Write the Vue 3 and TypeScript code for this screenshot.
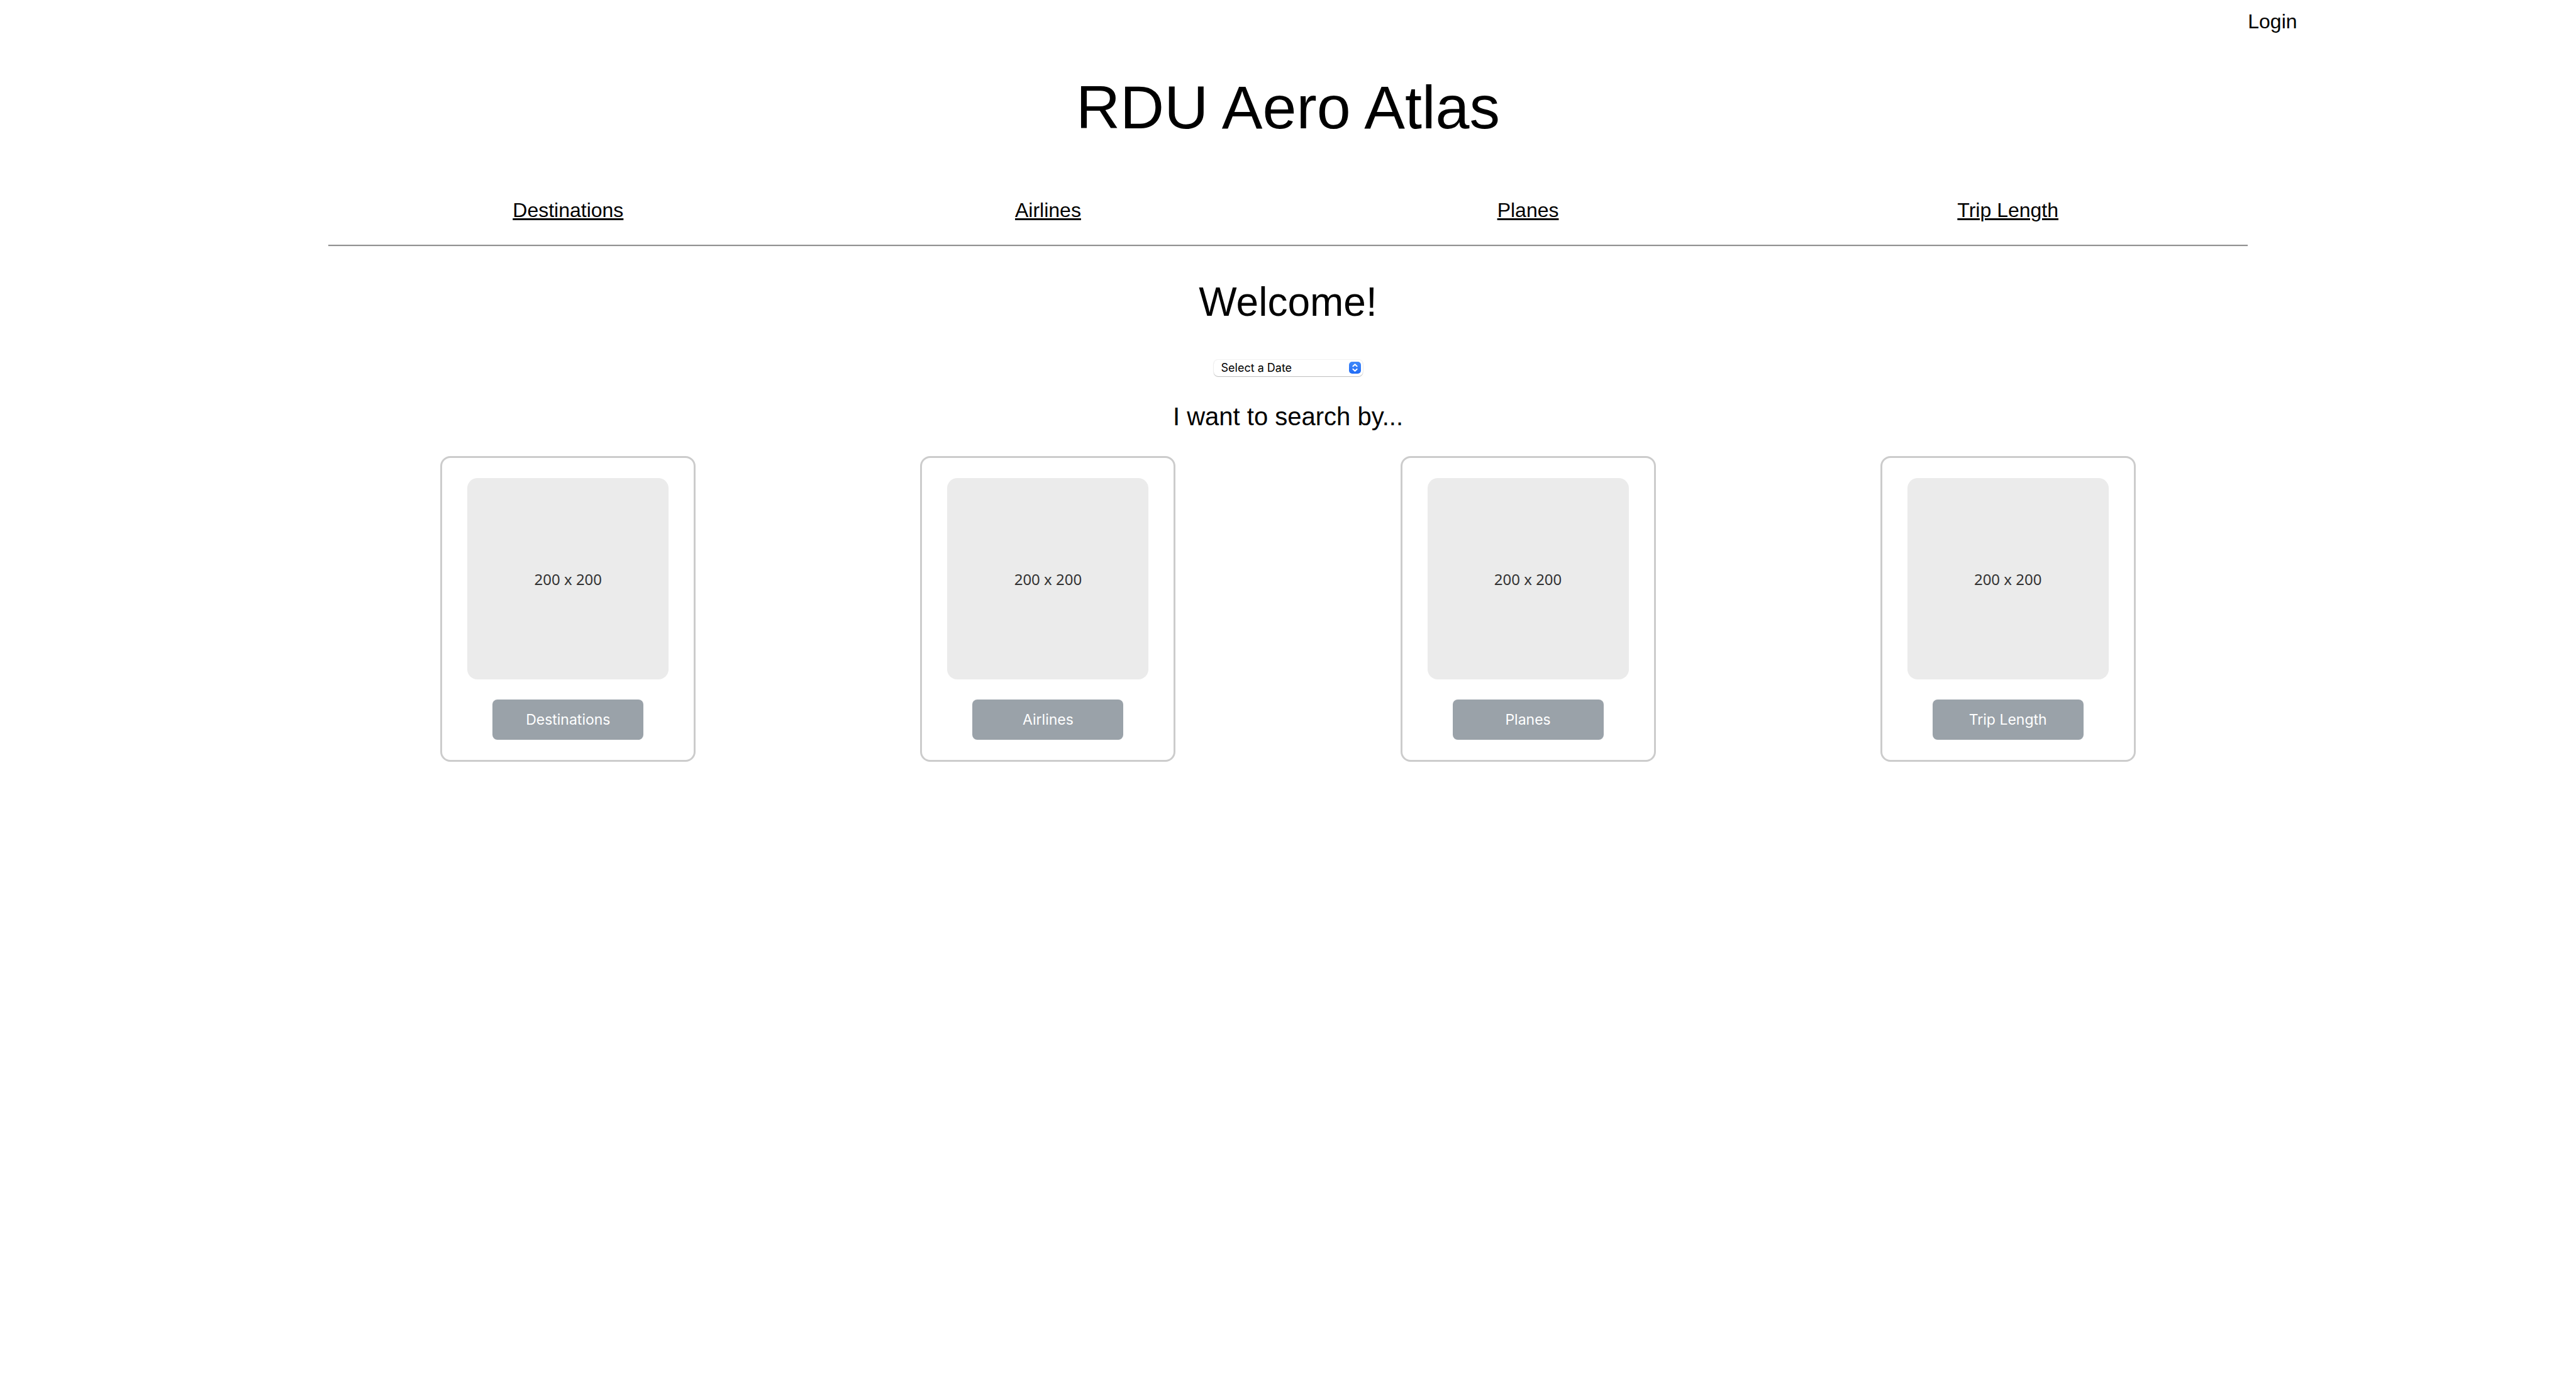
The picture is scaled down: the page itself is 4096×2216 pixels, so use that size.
<script setup lang="ts">
import { ref } from 'vue'

interface Category {
  name: string
  anchor: string
}

const categories: Category[] = [
  { name: 'Destinations', anchor: '#destinations' },
  { name: 'Airlines', anchor: '#airlines' },
  { name: 'Planes', anchor: '#planes' },
  { name: 'Trip Length', anchor: '#trip-length' },
]

const selectedDate = ref('')
</script>

<template>
  <div class="page">
    <header class="top">
      <a class="login" href="#login">Login</a>
    </header>

    <main class="content">
      <h1 class="title">RDU Aero Atlas</h1>

      <nav class="columns nav">
        <a v-for="item in categories" :key="item.name" class="nav-link" :href="item.anchor">{{ item.name }}</a>
      </nav>

      <hr class="rule" />

      <h2 class="welcome">Welcome!</h2>

      <div class="picker">
        <select v-model="selectedDate" class="date" aria-label="Date">
          <option value="">Select a Date</option>
        </select>
        <span class="stepper">
          <svg viewBox="0 0 24 24" width="19" height="19" aria-hidden="true">
            <path d="M8 9.2 12 5.4 16 9.2M8 14.8 12 18.6 16 14.8" fill="none" stroke="#fff" stroke-width="2.4" stroke-linecap="round" stroke-linejoin="round" />
          </svg>
        </span>
      </div>

      <h3 class="prompt">I want to search by...</h3>

      <div class="columns">
        <section v-for="item in categories" :key="item.name" class="card">
          <div class="thumb">200 x 200</div>
          <button class="action" type="button">{{ item.name }}</button>
        </section>
      </div>
    </main>
  </div>
</template>

<style>
body {
  margin: 0;
  background: #fff;
}
</style>

<style scoped>
.page {
  padding: 16px 13px;
  color: #000;
  font-family: "Liberation Sans", Arial, sans-serif;
}

.top {
  padding-left: 87.5%;
  font-size: 32px;
  line-height: 36px;
}

.login {
  color: inherit;
  text-decoration: none;
}

.content {
  display: flex;
  flex-direction: column;
  align-items: center;
  width: 75%;
  margin: 64px auto 0;
}

.title,
.welcome,
.prompt {
  margin: 0;
  font-weight: 400;
}

.title {
  font-size: 97px;
  line-height: 110px;
}

.columns {
  display: grid;
  grid-template-columns: repeat(4, 1fr);
  justify-items: center;
  width: 100%;
}

.nav {
  margin-top: 90px;
  font-size: 32px;
  line-height: 36px;
}

.nav-link {
  color: inherit;
  text-decoration-thickness: 3px;
}

.rule {
  box-sizing: border-box;
  width: 100%;
  margin: 37px 0 0;
  border: 0;
  border-top: 2px solid #8f8f8f;
  border-bottom: 1px solid #ececec;
}

.welcome {
  margin-top: 51px;
  font-size: 64px;
  line-height: 74px;
}

.picker {
  position: relative;
  margin-top: 55px;
}

.date {
  display: block;
  width: 237px;
  height: 26px;
  padding: 0 12px;
  border: 0;
  border-radius: 7px;
  appearance: none;
  background: #fff;
  box-shadow: 0 0 1px 1px rgba(0, 0, 0, 0.06), 0 1px 1px rgba(0, 0, 0, 0.22);
  color: #000;
  font-family: Inter, sans-serif;
  font-size: 18px;
  line-height: 26px;
}

.stepper {
  position: absolute;
  top: 3px;
  right: 3px;
  display: flex;
  border-radius: 5px;
  background: linear-gradient(#3f89fa, #226cf5);
  pointer-events: none;
}

.prompt {
  margin: 41px 0 40px;
  font-size: 40px;
  line-height: 46px;
}

.card {
  display: flex;
  flex-direction: column;
  align-items: center;
  gap: 32px;
  width: 400px;
  padding: 32px 0;
  border: 3px solid #ccc;
  border-radius: 16px;
}

.thumb {
  display: flex;
  align-items: center;
  justify-content: center;
  width: 320px;
  height: 320px;
  border-radius: 16px;
  background: #ebebeb;
  color: #333;
  font-family: "Noto Sans", sans-serif;
  font-size: 24px;
}

.action {
  width: 240px;
  height: 64px;
  padding: 0;
  border: 0;
  border-radius: 8px;
  background: #9aa2a9;
  color: #fff;
  font-family: Inter, sans-serif;
  font-size: 23px;
}
</style>
